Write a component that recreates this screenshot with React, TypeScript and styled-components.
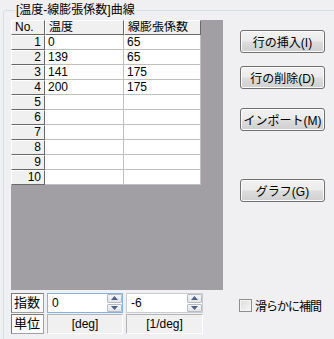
import React from 'react';
import styled, { createGlobalStyle } from 'styled-components';

const GlobalStyle = createGlobalStyle`
  html, body {
    margin: 0;
    padding: 0;
    background: #f0eff2;
  }
  body {
    font-family: "Liberation Sans", "Noto Sans CJK JP", sans-serif;
    font-size: 12px;
    color: #000;
  }
`;

const Window = styled.div`
  width: 334px;
  height: 339px;
  overflow: hidden;
  background: #f0eff2;
`;

const Group = styled.fieldset`
  margin: 4px 0 0 3px;
  padding: 3px 0 0 7px;
  width: 360px;
  height: 380px;
  box-sizing: border-box;
  border: 1px solid #d5dfe5;
  border-radius: 3px;
  min-width: 0;
`;

const Title = styled.legend`
  margin-left: 4px;
  padding: 0 1px;
  font-size: 12px;
  line-height: 13px;
`;

const Layout = styled.div`
  display: grid;
  grid-template-columns: 212px 85px;
  grid-template-rows: 270px auto;
  column-gap: 17px;
  row-gap: 3px;
`;

const Sheet = styled.div`
  background: #a19fa3;
  overflow: hidden;
`;

const SheetGrid = styled.div`
  display: grid;
  grid-template-columns: 34px 79px 77px;
  grid-auto-rows: 15px;
  width: 190px;
`;

const FixedCell = styled.div<{ $right?: boolean }>`
  box-sizing: border-box;
  background: #f0f0f0;
  border-top: 1px solid #ffffff;
  border-left: 1px solid #ffffff;
  border-right: 1px solid #696969;
  border-bottom: 1px solid #696969;
  padding: 0 3px;
  line-height: 13px;
  text-align: ${p => (p.$right ? 'right' : 'left')};
  white-space: nowrap;
  overflow: hidden;
`;

const DataCell = styled.div`
  box-sizing: border-box;
  background: #ffffff;
  border-right: 1px solid #c0c0c0;
  border-bottom: 1px solid #c0c0c0;
  padding: 0 3px;
  line-height: 14px;
  white-space: nowrap;
  overflow: hidden;
`;

const Buttons = styled.div`
  display: flex;
  flex-direction: column;
`;

const ActionButton = styled.button<{ $gap: number }>`
  margin-top: ${p => p.$gap}px;
  width: 85px;
  height: 23px;
  padding: 0;
  border: 1px solid #707070;
  border-radius: 3px;
  background: linear-gradient(#f2f2f2 0%, #ebebeb 48%, #dddddd 52%, #cfcfcf 100%);
  box-shadow: inset 0 0 0 1px #fbfbfb;
  font: inherit;
  color: #000;
`;

const Params = styled.div`
  display: flex;
  flex-direction: column;
  gap: 1px;
`;

const ParamRow = styled.div`
  display: flex;
  gap: 3px;
  height: 20px;
`;

const ParamLabel = styled.div`
  box-sizing: border-box;
  width: 33px;
  height: 20px;
  background: #fbfbfb;
  border: 1px solid #7a7a7a;
  border-right-color: #a0a0a0;
  border-bottom-color: #a0a0a0;
  padding-left: 2px;
  line-height: 18px;
  font-size: 13px;
`;

const SpinBox = styled.div<{ $width: number; $focused?: boolean }>`
  box-sizing: border-box;
  width: ${p => p.$width}px;
  height: 20px;
  display: flex;
  background: #fff;
  border: 1px solid ${p => (p.$focused ? '#7eb4ea' : '#c9cdd3')};
`;

const SpinText = styled.div`
  flex: 1;
  padding-left: 4px;
  line-height: 18px;
`;

const SpinButtons = styled.div`
  width: 15px;
  display: flex;
  flex-direction: column;
  gap: 1px;
  padding: 0 0 0 1px;
`;

const SpinArrow = styled.div`
  flex: 1;
  display: flex;
  align-items: center;
  justify-content: center;
  border: 1px solid #b8bcc2;
  border-radius: 1px;
  background: linear-gradient(#f5f6f7, #e2e4e8);
`;

const UnitCell = styled.div<{ $width: number }>`
  box-sizing: border-box;
  width: ${p => p.$width}px;
  height: 20px;
  background: #f0f0f0;
  border: 1px solid #b4b4b4;
  border-right-color: #ffffff;
  border-bottom-color: #ffffff;
  text-align: center;
  line-height: 18px;
`;

const CheckRow = styled.label`
  display: flex;
  align-items: center;
  gap: 3px;
  margin: 4px 0 0 -1px;
  white-space: nowrap;
  font-size: 12px;
  letter-spacing: -1px;
`;

const CheckBox = styled.span`
  box-sizing: border-box;
  width: 13px;
  height: 13px;
  border: 1px solid #8f8f8f;
  background: linear-gradient(135deg, #dcdcdc, #f6f6f6);
  box-shadow: inset 0 0 0 1px #f4f4f4;
`;

const Arrow = ({ up }: { up?: boolean }) => (
  <svg width="7" height="4" viewBox="0 0 7 4">
    <polygon points={up ? '0,4 7,4 3.5,0' : '0,0 7,0 3.5,4'} fill="#4d6185" />
  </svg>
);

const rows: [string, string][] = [
  ['0', '65'],
  ['139', '65'],
  ['141', '175'],
  ['200', '175'],
  ['', ''],
  ['', ''],
  ['', ''],
  ['', ''],
  ['', ''],
  ['', ''],
];

const Spin: React.FC<{ value: string; width: number; focused?: boolean }> = ({ value, width, focused }) => (
  <SpinBox $width={width} $focused={focused}>
    <SpinText>{value}</SpinText>
    <SpinButtons>
      <SpinArrow>
        <Arrow up />
      </SpinArrow>
      <SpinArrow>
        <Arrow />
      </SpinArrow>
    </SpinButtons>
  </SpinBox>
);

const App: React.FC = () => {
  return (
    <Window>
      <GlobalStyle />
      <Group>
        <Title>[温度-線膨張係数]曲線</Title>
        <Layout>
          <Sheet>
            <SheetGrid>
              <FixedCell>No.</FixedCell>
              <FixedCell>温度</FixedCell>
              <FixedCell>線膨張係数</FixedCell>
              {rows.map(([t, c], i) => (
                <React.Fragment key={i}>
                  <FixedCell $right>{i + 1}</FixedCell>
                  <DataCell>{t}</DataCell>
                  <DataCell>{c}</DataCell>
                </React.Fragment>
              ))}
            </SheetGrid>
          </Sheet>
          <Buttons>
            <ActionButton $gap={10}>行の挿入(I)</ActionButton>
            <ActionButton $gap={13}>行の削除(D)</ActionButton>
            <ActionButton $gap={19}>インポート(M)</ActionButton>
            <ActionButton $gap={48}>グラフ(G)</ActionButton>
          </Buttons>
          <Params>
            <ParamRow>
              <ParamLabel>指数</ParamLabel>
              <Spin value="0" width={76} focused />
              <Spin value="-6" width={77} />
            </ParamRow>
            <ParamRow>
              <ParamLabel>単位</ParamLabel>
              <UnitCell $width={76}>[deg]</UnitCell>
              <UnitCell $width={77}>[1/deg]</UnitCell>
            </ParamRow>
          </Params>
          <div>
            <CheckRow>
              <CheckBox />
              滑らかに補間
            </CheckRow>
          </div>
        </Layout>
      </Group>
    </Window>
  );
};

export default App;
